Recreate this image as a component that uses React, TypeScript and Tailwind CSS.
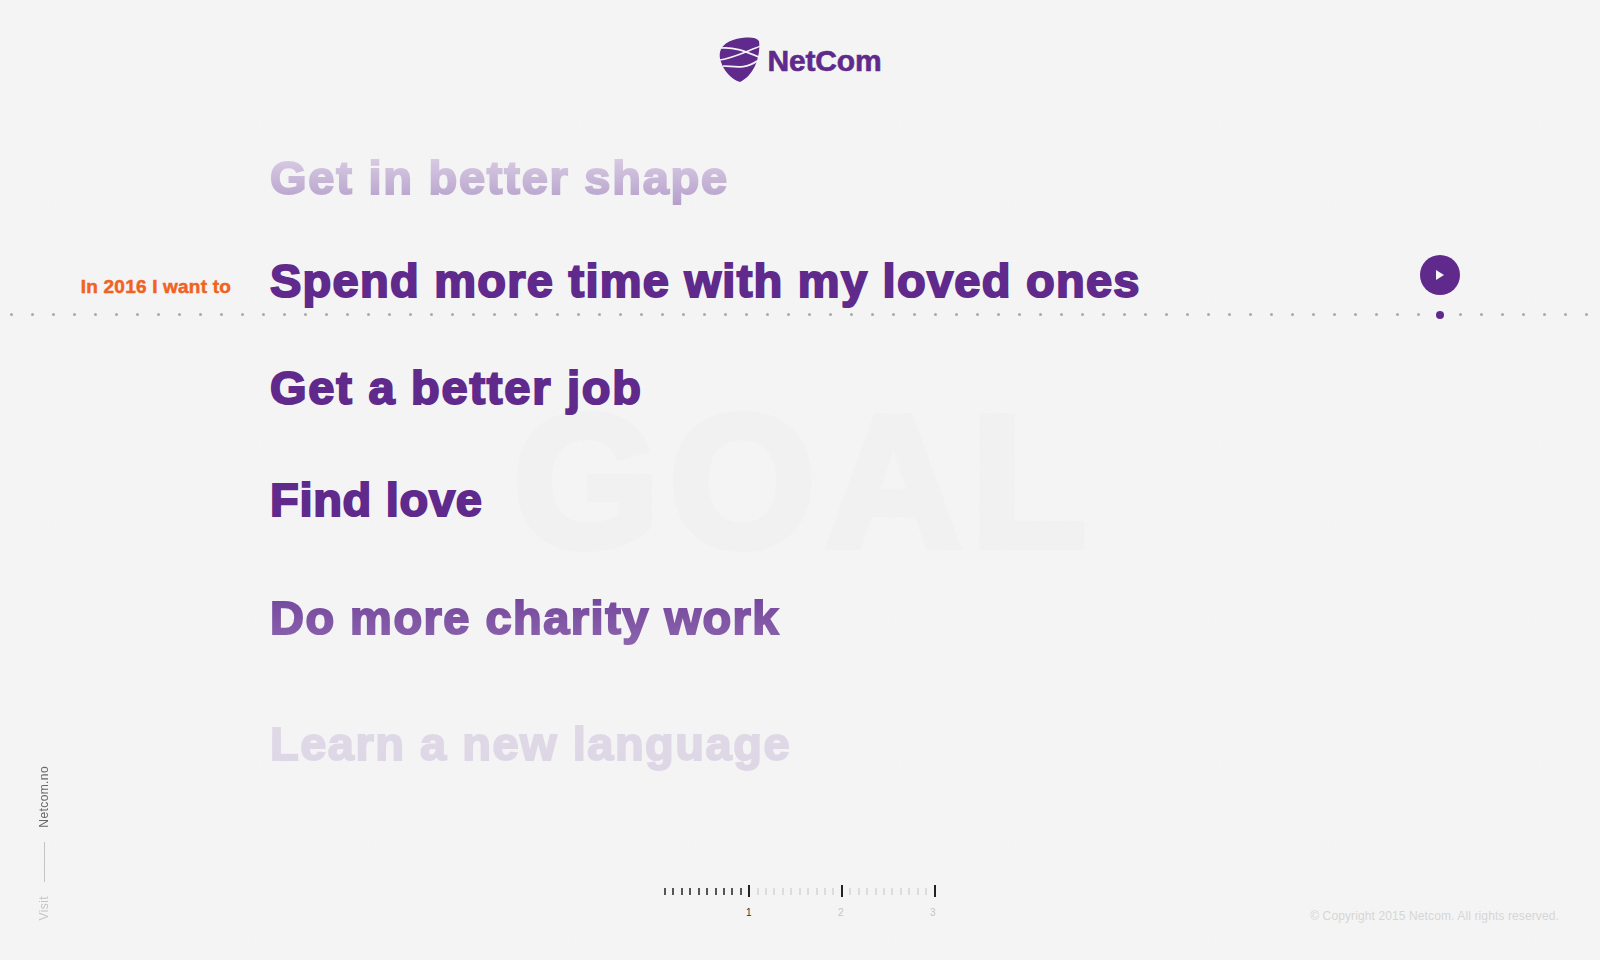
const dots = Array.from({ length: 76 }, (_, i) => i);
const ticks = Array.from({ length: 33 }, (_, i) => i);

function Logo() {
  return (
    <svg width="42" height="46" viewBox="0 0 42 46" className="shrink-0">
      <path d="M1 15C3 6 15 1 27 .5C33 0 38 1 40 4C41 10 40 20 36 29C32 37 27 42 21 45C12 42 5 34 2 25C.5 21 .5 18 1 15Z" fill="#5f2a8c" />
      <path d="M2 11C14 10 24 13 42 21" fill="none" stroke="#f5f5f5" strokeWidth="1.6" />
      <path d="M1 23C14 21 28 14 42 9" fill="none" stroke="#f5f5f5" strokeWidth="1.6" />
      <path d="M4 29C14 29 26 33 38 24" fill="none" stroke="#f5f5f5" strokeWidth="1.6" />
    </svg>
  );
}

export default function App() {
  return (
    <div className="relative h-[960px] w-[1600px] overflow-hidden bg-[#f5f5f5] font-['Liberation_Sans',sans-serif]">
      <svg className="pointer-events-none absolute inset-0 h-full w-full opacity-[0.03]">
        <filter id="grain"><feTurbulence type="fractalNoise" baseFrequency="0.8" numOctaves="2" /><feColorMatrix type="saturate" values="0" /></filter>
        <rect width="100%" height="100%" filter="url(#grain)" />
      </svg>
      <span className="absolute left-[513px] top-[421px] select-none text-[188px] font-bold leading-[120px] tracking-[10px] text-[#f1f1f1] [-webkit-text-stroke:8px_#f1f1f1]">GOAL</span>
      <header className="relative flex h-[120px] items-center justify-center">
        <div className="flex items-center gap-[7px]">
          <Logo />
          <span className="text-[30px] font-bold tracking-[-0.2px] text-[#5f2a8c] [-webkit-text-stroke:0.6px_#5f2a8c]">NetCom</span>
        </div>
      </header>
      <main className="relative flex flex-col pl-[270px] text-[47px] font-bold leading-[58px] text-[#5f2a8c] [-webkit-text-stroke:2px_#5f2a8c]">
        <div className="mt-[29px] w-fit bg-gradient-to-b from-[#ded4e7] to-[#b49dc9] bg-clip-text tracking-[1.75px] text-transparent [-webkit-text-stroke:2px_transparent]">Get in better shape</div>
        <div className="relative mt-[45px] tracking-[1.26px]">
          <span className="absolute right-[100%] top-[23px] mr-[39px] whitespace-nowrap text-[19px] leading-[24px] tracking-[0.2px] text-[#f0621f] [-webkit-text-stroke:0.5px_#f0621f]">In 2016 I want to</span>
          Spend more time with my loved ones
        </div>
        <div className="mt-[49px] tracking-[1.75px]">Get a better job</div>
        <div className="mt-[54px] tracking-[0.7px]">Find love</div>
        <div className="mt-[60px] w-fit bg-gradient-to-b from-[#70429a] to-[#8e66ae] bg-clip-text tracking-[1.47px] text-transparent [-webkit-text-stroke:2px_transparent]">Do more charity work</div>
        <div className="mt-[68px] w-fit bg-gradient-to-b from-[#dfd9e6] to-[#ded6e6] bg-clip-text tracking-[1.5px] text-transparent [-webkit-text-stroke:2px_transparent]">Learn a new language</div>
      </main>
      <div className="absolute left-0 right-0 top-[313px] flex gap-[18px] pl-[10px]">
        {dots.map((i) => (
          <span key={i} className="h-[3px] w-[3px] shrink-0 rounded-full bg-[#a9a9a9]" />
        ))}
      </div>
      <div className="absolute left-[1420px] top-[255px] flex h-[40px] w-[40px] items-center justify-center rounded-full bg-[#5f2a8c]">
        <svg width="10" height="12" viewBox="0 0 10 12"><path d="M1 1L9 6L1 11Z" fill="#f5f5f5" /></svg>
      </div>
      <span className="absolute left-[1436px] top-[311px] h-[8px] w-[8px] rounded-full bg-[#5f2a8c]" />
      <div className="absolute bottom-[40px] left-[37px] flex flex-col-reverse items-center gap-[14px] text-[12px] leading-[14px]">
        <span className="[writing-mode:vertical-rl] rotate-180 tracking-[0.4px] text-[#c4c4c4]">Visit</span>
        <span className="h-[40px] w-px bg-[#c4c4c4]" />
        <span className="[writing-mode:vertical-rl] rotate-180 tracking-[0.4px] text-[#666666]">Netcom.no</span>
      </div>
      <div className="absolute left-[664px] top-[885px] flex h-[12px] items-center">
        {ticks.map((i) => (
          <span key={i} className="flex w-[8.43px] shrink-0">
            <span className={i === 10 || i === 21 || i === 32 ? "h-[12px] w-[2px] bg-[#222222]" : i < 10 ? "h-[7px] w-[2px] bg-[#555555]" : "h-[7px] w-[2px] bg-[#dcdcdc]"} />
          </span>
        ))}
      </div>
      <span className="absolute left-[746px] top-[907px] text-[10px] leading-[12px] text-[#333333]">1</span>
      <span className="absolute left-[838px] top-[907px] text-[10px] leading-[12px] text-[#c4c4c4]">2</span>
      <span className="absolute left-[930px] top-[907px] text-[10px] leading-[12px] text-[#c4c4c4]">3</span>
      <span className="absolute right-[41px] top-[908px] text-[12px] leading-[16px] tracking-[0.115px] text-[#d6d6d6]">© Copyright 2015 Netcom. All rights reserved.</span>
    </div>
  );
}
